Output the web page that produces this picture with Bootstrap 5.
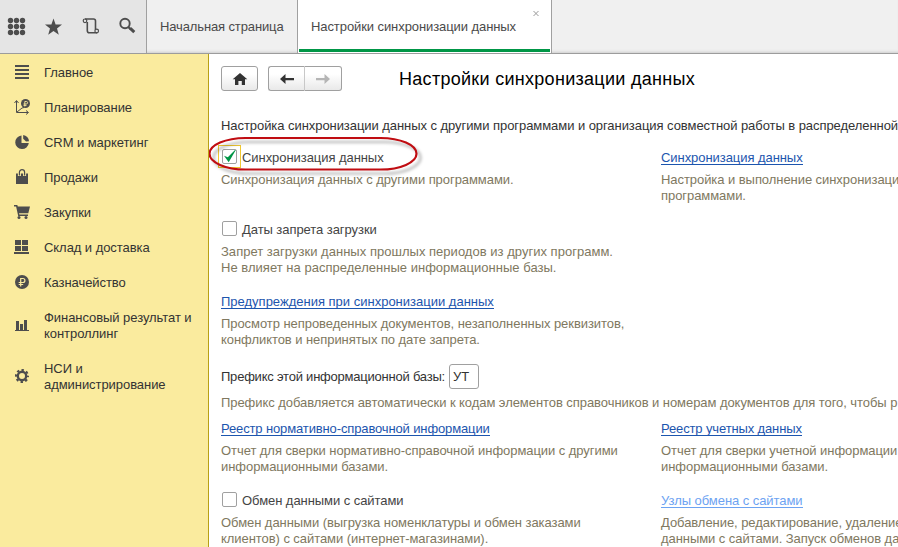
<!DOCTYPE html>
<html lang="ru">
<head>
<meta charset="utf-8">
<meta name="viewport" content="width=device-width, initial-scale=1">
<title>Настройки синхронизации данных</title>
<link href="https://cdn.jsdelivr.net/npm/bootstrap@5.3.0/dist/css/bootstrap.min.css" rel="stylesheet">
<style>
body{font:13px/16px "Liberation Sans",Arial,sans-serif;color:#333;letter-spacing:-.06px;height:547px}
svg{display:block;flex:none}
.topbar{height:54px;background:#f0f0f0;border-bottom:1px solid #9c9c9c;box-shadow:inset 0 -3px 3px -2px #ccc}
.tools{width:147px;background:#e5e5e5;border-right:1px solid #a0a0a0;color:#4d4d4d}
.tool{width:37px}
.tab{color:#4a4a4a;border-right:1px solid #a0a0a0;padding-left:13px}
.tab-home{width:151px;letter-spacing:-.127px}
.tab-open{width:255px;background:#fff;border-left:1px solid #a0a0a0;padding-left:13px;margin-left:-1px;letter-spacing:-.083px}
.tab-open::after{content:"";position:absolute;left:1px;right:1px;bottom:1px;height:3px;background:#009646}
.tab-x{position:absolute;right:12px;top:10px}
.side{width:209px;background:#faeb9e;border-right:1px solid #b8a015;padding-top:1px}
.side a{color:#333;min-height:35px;padding-left:14px;gap:14px}
.side a svg{width:16px;height:16px;color:#4d4d4d;margin-top:-1px}
.side .tall{min-height:51px}
.content{padding:12px 0 0 12px}
.tbtn{width:37px;height:25px;border:1px solid #a0a0a0;border-radius:3px;background:linear-gradient(#fff 30%,#e9e9e9);padding:0}
.pair{margin-left:10px}
.pair .tbtn:first-child{border-radius:3px 0 0 3px;border-right-color:#c8c8c8}
.pair .tbtn:last-child{border-radius:0 3px 3px 0;border-left:0}
.page-title{font-size:18px;line-height:24px;color:#000;margin-left:57px;letter-spacing:.29px;padding-top:1px}
.intro{margin:27px 0 16px}
.pane-l{width:440px}
.item{height:72px}
.item-field{height:127px}
.item-field .lnk{letter-spacing:0}
.reg .lnk{letter-spacing:-.13px}
.note{color:#807860;margin-top:7px}
.opt + .note{margin-top:6px}
.wide{letter-spacing:.022px}
.lnk{display:block;width:max-content;height:15px;border-bottom:1px solid #1c55ae;color:#1c55ae;text-decoration:none}
.lnk:hover{color:#1c55ae}
.lnk-dim,.lnk-dim:hover{color:#6da3f2;border-color:#6da3f2}
.opt{height:16px;color:#444}
.chk{width:15px;height:15px;border:1px solid #a0a0a0;border-radius:2px;background:#fff;margin:-1px 5px 0 1px}
.focus-frame{position:absolute;left:-3px;top:-5px;width:23px;height:23px;border:1px solid #f0c832}
.prefix{width:30px;height:25px;border:1px solid #a0a0a0;border-radius:3px;padding:0 0 0 3px;color:#333;line-height:23px;margin-left:4px}
.pfx{margin-top:16px;letter-spacing:-.221px}
.pfx + .note{margin-top:6px}
.marker{position:absolute;left:-13px;top:-14px;pointer-events:none;overflow:visible}
</style>
<script src="https://cdn.jsdelivr.net/npm/bootstrap@5.3.0/dist/js/bootstrap.bundle.min.js"></script>
</head>
<body class="d-flex flex-column overflow-hidden m-0">
<header class="topbar d-flex flex-shrink-0">
  <div class="tools d-flex align-items-center flex-shrink-0">
    <span class="tool"><svg width="37" height="52" fill="currentColor"><circle cx="10.500" cy="19.500" r="2.700"/><circle cx="16.500" cy="19.500" r="2.700"/><circle cx="22.500" cy="19.500" r="2.700"/><circle cx="10.500" cy="25.500" r="2.700"/><circle cx="16.500" cy="25.500" r="2.700"/><circle cx="22.500" cy="25.500" r="2.700"/><circle cx="10.500" cy="31.500" r="2.700"/><circle cx="16.500" cy="31.500" r="2.700"/><circle cx="22.500" cy="31.500" r="2.700"/></svg></span>
    <span class="tool"><svg width="37" height="52" fill="currentColor"><path d="M16.500 17.500l2.100 5.900 6.400.2-5 3.900 1.800 6.300-5.300-3.700-5.300 3.700 1.800-6.300-5-3.900 6.400-.2z"/></svg></span>
    <span class="tool"><svg width="37" height="52" fill="none" stroke="currentColor" stroke-width="1.600"><path d="M11 18h8.500q2 0 2 2V28.500M13.300 21V29.500q0 2.300 2 2.300h8"/><circle cx="11" cy="19.800" r="1.800" stroke-width="1.200"/><circle cx="22.700" cy="30" r="1.800" stroke-width="1.200"/></svg></span>
    <span class="tool"><svg width="36" height="52" fill="none" stroke="currentColor"><circle cx="14" cy="22.500" r="4.700" stroke-width="1.900"/><path d="M17.300 26l2 2" stroke-width="2"/><path d="M19 27.200l4.300 4" stroke-width="3"/></svg></span>
  </div>
  <div class="tab tab-home d-flex align-items-center flex-shrink-0">Начальная страница</div>
  <div class="tab tab-open position-relative d-flex align-items-center flex-shrink-0">Настройки синхронизации данных
    <svg class="tab-x" width="6" height="7" stroke="#999" fill="none"><path d="M.5 1l5 5M5.500 1l-5 5"/></svg></div>
</header>
<div class="d-flex flex-grow-1 overflow-hidden">
  <nav class="side d-flex flex-column flex-shrink-0">
    <a class="d-flex align-items-center text-decoration-none"><svg fill="currentColor"><path d="M1 1h14v2H1zM1 5h14v2H1zM1 9h14v2H1zM1 13h14v2H1z"/></svg>Главное</a>
    <a class="d-flex align-items-center text-decoration-none"><svg fill="none" stroke="currentColor"><path d="M2.500 2v11.500H14M.5 4l2-2.500 2 2.500M12 11.500l2.500 2-2.500 2M3 13l5-4 2-.5"/><circle cx="11.500" cy="4.500" r="4.500" fill="currentColor" stroke="none"/><path d="M10.800 7.500V2.500h1.500q1.300 0 1.300 1.200T12.300 5H9.500M9.500 6.400h3" stroke="#faeb9e" stroke-width=".9"/></svg>Планирование</a>
    <a class="d-flex align-items-center text-decoration-none"><svg fill="currentColor"><path d="M7.500 1.500a6.800 6.800 0 1 0 7.300 7.500H7.500z"/><path d="M9.200 1a6.500 6.500 0 0 1 5.800 6.200l-3 .3-2.800-2.800z"/></svg>CRM и маркетинг</a>
    <a class="d-flex align-items-center text-decoration-none"><svg fill="currentColor"><path d="M2 4.500h12V15H2z"/><path d="M5.400 7V3.500a2.600 2.600 0 0 1 5.200 0V7" fill="none" stroke="#faeb9e" stroke-width="3"/><path d="M5.400 6.500V3.300a2.600 2.600 0 0 1 5.200 0v3.200" fill="none" stroke="currentColor" stroke-width="1.200"/></svg>Продажи</a>
    <a class="d-flex align-items-center text-decoration-none"><svg fill="currentColor"><path d="M0 1h3.300l.5 1.500H16l-1.700 6.700H5l.4 1.300H14V12H4.200L2.100 2.500H0z"/><circle cx="5" cy="13.600" r="1.500"/><circle cx="12" cy="13.600" r="1.500"/></svg>Закупки</a>
    <a class="d-flex align-items-center text-decoration-none"><svg fill="currentColor"><path d="M1 1h6v5H1zM8 1h6v5H8zM1 7h6v5H1zM8 7h6v5H8zM0 13h15v2H0z"/></svg>Склад и доставка</a>
    <a class="d-flex align-items-center text-decoration-none"><svg fill="currentColor"><circle cx="8" cy="8" r="7"/><path d="M6.700 12.500V4.500h2.200q2 0 2 2T8.900 8.500H4.700M4.700 10.500h4.500" fill="none" stroke="#faeb9e" stroke-width="1.200"/></svg>Казначейство</a>
    <a class="tall d-flex align-items-center text-decoration-none"><svg fill="currentColor"><path d="M2 4h3v9H2zM6 7h3v6H6zM10 3h3v10h-3zM1 13h14v1H1z"/></svg><span>Финансовый результат и<br>контроллинг</span></a>
    <a class="tall d-flex align-items-center text-decoration-none"><svg fill="none" stroke="currentColor"><circle cx="8" cy="8" r="4.200" stroke-width="2.400"/><circle cx="8" cy="8" r="6" stroke-width="2" stroke-dasharray="2.400 2.312" stroke-dashoffset="1.200"/></svg><span>НСИ и<br>администрирование</span></a>
  </nav>
  <main class="content flex-grow-1 overflow-hidden text-nowrap">
    <div class="d-flex align-items-center">
      <button class="tbtn d-flex align-items-center justify-content-center" aria-label="Домой"><svg width="16" height="14" fill="#333"><path d="M8 1l7.300 6.300H13V13H9.800V9H6.400v4H3V7.300H.7z"/></svg></button>
      <div class="pair d-flex"><button class="tbtn d-flex align-items-center justify-content-center" aria-label="Назад"><svg width="16" height="12" fill="#333"><path d="M1 6l5.500-5v4H15v2.200H6.500V11z"/></svg></button><button class="tbtn d-flex align-items-center justify-content-center" aria-label="Вперед"><svg width="16" height="12" fill="#b5b5b5"><path d="M15 6L9.500 1v4H1v2.200h8.500V11z"/></svg></button></div>
      <h1 class="page-title mb-0 fw-normal">Настройки синхронизации данных</h1>
    </div>
    <div class="intro">Настройка синхронизации данных с другими программами и организация совместной работы в распределенной</div>

    <section class="item d-flex">
      <div class="pane-l flex-shrink-0">
        <div class="opt position-relative d-flex align-items-start"><span class="focus-frame"></span><span class="chk position-relative"><svg width="13" height="13" fill="#009646"><path d="M1 5.700l3.800 1.500L12 0h.8L5.700 12.200z"/></svg></span>Синхронизация данных
          <svg class="marker" width="220" height="46"><rect x="1.500" y="2" width="207" height="31.500" rx="36" ry="15.750" fill="none" stroke="#c00d12" stroke-width="2.200" style="filter:drop-shadow(4px 4px 1.500px rgba(0,0,0,.3))"/></svg></div>
        <div class="note">Синхронизация данных с другими программами.</div>
      </div>
      <div><a class="lnk" href="#">Синхронизация данных</a>
        <div class="note">Настройка и выполнение синхронизации<br>программами.</div></div>
    </section>
    <section class="item">
      <div class="opt d-flex align-items-start"><span class="chk"></span>Даты запрета загрузки</div>
      <div class="note wide">Запрет загрузки данных прошлых периодов из других программ.<br>Не влияет на распределенные информационные базы.</div>
    </section>
    <section class="item-field">
      <a class="lnk" href="#">Предупреждения при синхронизации данных</a>
      <div class="note">Просмотр непроведенных документов, незаполненных реквизитов,<br>конфликтов и непринятых по дате запрета.</div>
      <div class="pfx d-flex align-items-center"><label for="prefix">Префикс этой информационной базы:</label><input id="prefix" class="prefix" value="УТ"></div>
      <div class="note">Префикс добавляется автоматически к кодам элементов справочников и номерам документов для того, чтобы р</div>
    </section>
    <section class="item d-flex reg">
      <div class="pane-l flex-shrink-0"><a class="lnk" href="#">Реестр нормативно-справочной информации</a>
        <div class="note">Отчет для сверки нормативно-справочной информации с другими<br>информационными базами.</div></div>
      <div><a class="lnk" href="#">Реестр учетных данных</a>
        <div class="note">Отчет для сверки учетной информации<br>информационными базами.</div></div>
    </section>
    <section class="d-flex">
      <div class="pane-l flex-shrink-0">
        <div class="opt d-flex align-items-start"><span class="chk"></span>Обмен данными с сайтами</div>
        <div class="note">Обмен данными (выгрузка номенклатуры и обмен заказами<br>клиентов) с сайтами (интернет-магазинами).</div></div>
      <div><a class="lnk lnk-dim" href="#">Узлы обмена с сайтами</a>
        <div class="note">Добавление, редактирование, удаление<br>данными с сайтами. Запуск обменов да</div></div>
    </section>
  </main>
</div>
</body>
</html>
